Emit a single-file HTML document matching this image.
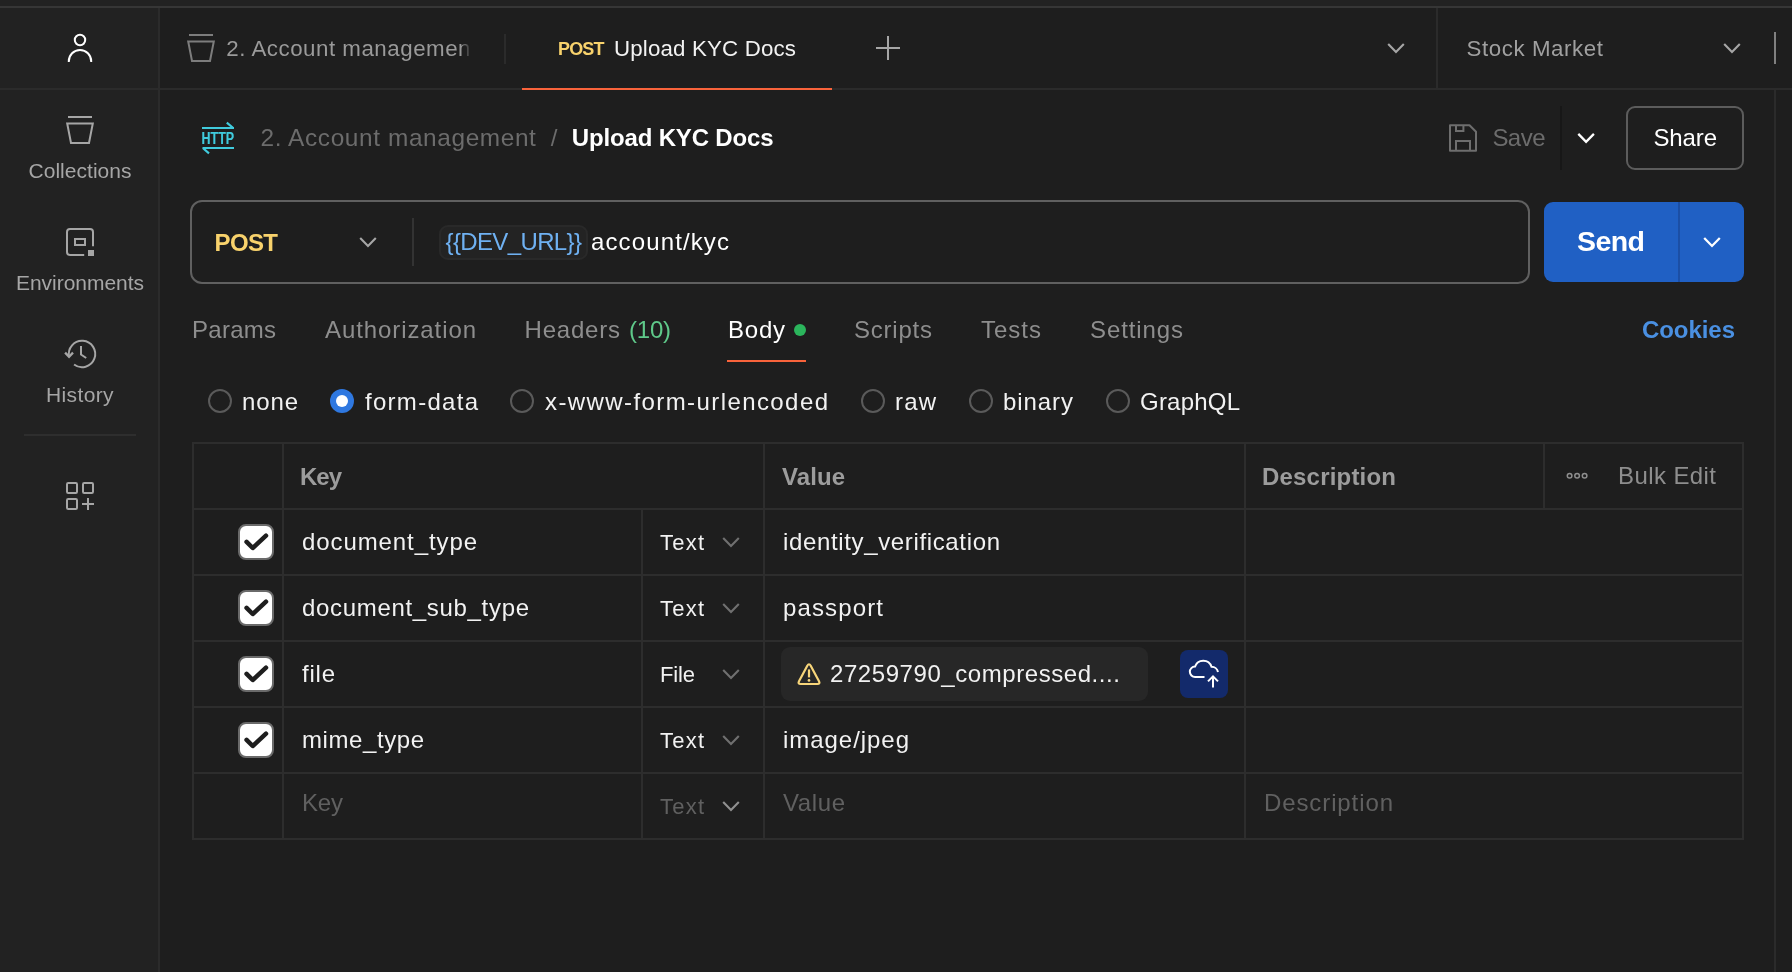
<!DOCTYPE html>
<html lang="en"><head><meta charset="utf-8"><title>Upload KYC Docs</title>
<style>
html,body{margin:0;padding:0;background:#1e1e1e;}
body{width:1792px;height:972px;overflow:hidden;position:relative;font-family:"Liberation Sans",Arial,sans-serif;}
#app{position:absolute;left:0;top:0;width:1792px;height:972px;overflow:hidden;background:#1e1e1e;will-change:transform;}
.a{position:absolute;display:block;}
.t{white-space:nowrap;}
</style></head><body><div id="app">
<div class="a" style="left:0px;top:0px;width:158px;height:972px;background:#222222;"></div>
<div class="a" style="left:0px;top:0px;width:1792px;height:6px;background:#222222;"></div>
<div class="a" style="left:0px;top:6px;width:1792px;height:2px;background:#363636;"></div>
<div class="a" style="left:158px;top:8px;width:2px;height:964px;background:#2b2b2b;"></div>
<div class="a" style="left:0px;top:88px;width:1792px;height:2px;background:#2b2b2b;"></div>
<div class="a" style="left:1774px;top:90px;width:2px;height:882px;background:#2b2b2b;"></div>
<div class="a" style="left:1436px;top:8px;width:2px;height:80px;background:#2b2b2b;"></div>
<div class="a" style="left:1774px;top:32px;width:2px;height:32px;background:#808080;"></div>
<svg class="a" style="left:60px;top:24px;" width="40" height="44" viewBox="0 0 40 44" fill="none"><circle cx="20" cy="16" r="5.2" stroke="#fff" stroke-width="2"/><path d="M8.8 38 V37.2 A11.2 11.2 0 0 1 31.2 37.2 V38" stroke="#fff" stroke-width="2"/></svg>
<svg class="a" style="left:64px;top:114px;" width="32" height="32" viewBox="0 0 32 32" fill="none"><path d="M4 3 H28" stroke="#a6a6a6" stroke-width="2"/><path d="M3.2 9.4 H28.8 L25 28.9 H7 Z" stroke="#a6a6a6" stroke-width="2" stroke-linejoin="miter"/></svg>
<div class="a t" style="left:28.50px;top:157.00px;font-size:21px;line-height:27px;color:#a6a6a6;letter-spacing:0.028px;">Collections</div>
<svg class="a" style="left:60px;top:226px;" width="40" height="34" viewBox="0 0 40 34" fill="none"><path d="M33 20.3 V6 a3 3 0 0 0 -3 -3 H10 a3 3 0 0 0 -3 3 V26 a3 3 0 0 0 3 3 H24.2" stroke="#a6a6a6" stroke-width="2"/><rect x="15" y="13" width="10" height="6" stroke="#a6a6a6" stroke-width="2"/><rect x="28" y="24" width="6" height="6" fill="#a6a6a6"/></svg>
<div class="a t" style="left:16.00px;top:269.00px;font-size:21px;line-height:27px;color:#a6a6a6;letter-spacing:-0.036px;">Environments</div>
<svg class="a" style="left:60px;top:334px;" width="40" height="40" viewBox="0 0 40 40" fill="none"><path d="M9.09 22.74 A13.2 13.2 0 1 1 14.06 30.54" stroke="#a6a6a6" stroke-width="2"/><path d="M5.1 18.6 L9.05 22.75 L13 18.6" stroke="#a6a6a6" stroke-width="2.3" stroke-linejoin="miter"/><path d="M21 12 V20.5 L26.2 24" stroke="#a6a6a6" stroke-width="2"/></svg>
<div class="a t" style="left:46.00px;top:381.00px;font-size:21px;line-height:27px;color:#a6a6a6;letter-spacing:0.377px;">History</div>
<div class="a" style="left:24px;top:434px;width:112px;height:2px;background:#2e2e2e;"></div>
<svg class="a" style="left:60px;top:476px;" width="40" height="40" viewBox="0 0 40 40" fill="none"><rect x="7" y="7" width="10" height="10" rx="1.2" stroke="#a6a6a6" stroke-width="2"/><rect x="23" y="7" width="10" height="10" rx="1.2" stroke="#a6a6a6" stroke-width="2"/><rect x="7" y="23" width="10" height="10" rx="1.2" stroke="#a6a6a6" stroke-width="2"/><path d="M28 22 V34 M22 28 H34" stroke="#a6a6a6" stroke-width="2"/></svg>
<svg class="a" style="left:185px;top:32px;" width="32" height="32" viewBox="0 0 32 32" fill="none"><path d="M4 3 H28" stroke="#7d7d7d" stroke-width="2"/><path d="M3.2 9.4 H28.8 L25 28.9 H7 Z" stroke="#7d7d7d" stroke-width="2" stroke-linejoin="miter"/></svg>
<div class="a t" style="left:226.30px;top:34.00px;font-size:22.3px;line-height:29px;color:#9a9a9a;letter-spacing:0.521px;width:246px;overflow:hidden;">2. Account management</div>
<div class="a" style="left:461px;top:36px;width:12px;height:28px;background:linear-gradient(to right,rgba(30,30,30,0),#1e1e1e 85%);"></div>
<div class="a" style="left:504px;top:34px;width:2px;height:30px;background:#2b2b2b;"></div>
<div class="a t" style="left:558.00px;top:37.00px;font-size:18px;line-height:24px;color:#f8d26c;font-weight:700;letter-spacing:-0.836px;">POST</div>
<div class="a t" style="left:614.00px;top:34.00px;font-size:22.3px;line-height:29px;color:#f2f2f2;letter-spacing:0.163px;">Upload KYC Docs</div>
<div class="a" style="left:522px;top:88px;width:310px;height:2px;background:#f9633b;"></div>
<svg class="a" style="left:874px;top:34px;" width="28" height="28" viewBox="0 0 28 28" fill="none"><path d="M14 2 V26 M2 14 H26" stroke="#a6a6a6" stroke-width="2"/></svg>
<svg class="a" style="left:1382px;top:38px;" width="28" height="20" viewBox="0 0 28 20" fill="none"><path d="M6.20 5.95 L14.00 13.95 L21.80 5.95" stroke="#a6a6a6" stroke-width="2.1"/></svg>
<div class="a t" style="left:1466.50px;top:34.00px;font-size:22.3px;line-height:29px;color:#a0a0a0;letter-spacing:0.580px;">Stock Market</div>
<svg class="a" style="left:1718px;top:38px;" width="28" height="20" viewBox="0 0 28 20" fill="none"><path d="M6.20 5.95 L14.00 13.95 L21.80 5.95" stroke="#a6a6a6" stroke-width="2.1"/></svg>
<svg class="a" style="left:198px;top:120px;" width="40" height="38" viewBox="0 0 40 38" fill="none"><path d="M4 8 H36 M28.8 2.6 L35.2 8" stroke="#40cbdd" stroke-width="2.2"/><path d="M36 28 H4.5 M4.8 28 L11 33.3" stroke="#40cbdd" stroke-width="2.2"/><text x="3.6" y="24.1" font-family="Liberation Sans, Arial, sans-serif" font-size="17.2" font-weight="700" fill="#40cbdd" stroke="#40cbdd" stroke-width="0.2" textLength="32.6" lengthAdjust="spacingAndGlyphs">HTTP</text></svg>
<div class="a t" style="left:260.50px;top:122.00px;font-size:24.4px;line-height:31px;color:#6c6c6c;letter-spacing:0.617px;">2. Account management</div>
<div class="a t" style="left:550.70px;top:122.00px;font-size:24px;line-height:31px;color:#6c6c6c;">/</div>
<div class="a t" style="left:571.80px;top:122.00px;font-size:24px;line-height:31px;color:#ffffff;font-weight:700;letter-spacing:-0.166px;">Upload KYC Docs</div>
<svg class="a" style="left:1446px;top:122px;" width="34" height="32" viewBox="0 0 34 32" fill="none"><path d="M4 3.2 H23.5 L30 9.7 V28.8 H4 Z" stroke="#6e6e6e" stroke-width="2" stroke-linejoin="round"/><path d="M10 3.2 V8.9 H17.4 V3.2" stroke="#6e6e6e" stroke-width="2"/><path d="M10 28.8 V18.9 H24 V28.8" stroke="#6e6e6e" stroke-width="2"/></svg>
<div class="a t" style="left:1492.40px;top:122.00px;font-size:24px;line-height:31px;color:#6c6c6c;letter-spacing:-0.535px;">Save</div>
<div class="a" style="left:1560px;top:106px;width:2px;height:64px;background:#171717;"></div>
<svg class="a" style="left:1572px;top:128px;" width="28" height="20" viewBox="0 0 28 20" fill="none"><path d="M6.30 5.85 L14.10 13.85 L21.90 5.85" stroke="#ffffff" stroke-width="2.3"/></svg>
<div class="a" style="left:1626px;top:106px;width:118px;height:64px;border:2px solid #5c5c5c;box-sizing:border-box;border-radius:9px;"></div>
<div class="a t" style="left:1653.50px;top:122.00px;font-size:24px;line-height:31px;color:#ffffff;letter-spacing:-0.136px;">Share</div>
<div class="a" style="left:190px;top:200px;width:1340px;height:84px;border:2px solid #606060;box-sizing:border-box;border-radius:12px;"></div>
<div class="a t" style="left:214.50px;top:227.00px;font-size:24px;line-height:31px;color:#f8d26c;font-weight:700;letter-spacing:-0.615px;">POST</div>
<svg class="a" style="left:354px;top:232px;" width="28" height="20" viewBox="0 0 28 20" fill="none"><path d="M6.20 5.95 L14.00 13.95 L21.80 5.95" stroke="#a6a6a6" stroke-width="2.1"/></svg>
<div class="a" style="left:412px;top:218px;width:2px;height:48px;background:#333333;"></div>
<div class="a" style="left:439px;top:225px;width:149px;height:35px;background:#232323;border:2px solid #292929;box-sizing:border-box;border-radius:9px;"></div>
<div class="a t" style="left:445.50px;top:226.00px;font-size:24px;line-height:31px;color:#6fb1f2;letter-spacing:-0.627px;">{{DEV_URL}}</div>
<div class="a t" style="left:591.00px;top:226.00px;font-size:24px;line-height:31px;color:#ffffff;letter-spacing:1.127px;">account/kyc</div>
<div class="a" style="left:1544px;top:202px;width:200px;height:80px;background:#2060c4;border-radius:9px;"></div>
<div class="a" style="left:1678px;top:202px;width:2px;height:80px;background:#1b4fa6;"></div>
<div class="a t" style="left:1577.00px;top:223.00px;font-size:28.5px;line-height:36px;color:#ffffff;font-weight:700;letter-spacing:-0.560px;">Send</div>
<svg class="a" style="left:1698px;top:232px;" width="28" height="20" viewBox="0 0 28 20" fill="none"><path d="M6.20 5.95 L14.00 13.95 L21.80 5.95" stroke="#ffffff" stroke-width="2.3"/></svg>
<div class="a t" style="left:192.00px;top:314.00px;font-size:24px;line-height:31px;color:#8e8e8e;letter-spacing:0.262px;">Params</div>
<div class="a t" style="left:325.00px;top:314.00px;font-size:24px;line-height:31px;color:#8e8e8e;letter-spacing:0.909px;">Authorization</div>
<div class="a t" style="left:524.50px;top:314.00px;font-size:24px;line-height:31px;color:#8e8e8e;letter-spacing:0.797px;">Headers</div>
<div class="a t" style="left:629.00px;top:314.00px;font-size:24px;line-height:31px;color:#5fc98a;letter-spacing:-0.227px;">(10)</div>
<div class="a t" style="left:728.00px;top:314.00px;font-size:24px;line-height:31px;color:#ffffff;letter-spacing:0.765px;">Body</div>
<div class="a" style="left:794px;top:324px;width:12px;height:12px;background:#2bb55c;border-radius:6px;"></div>
<div class="a" style="left:727px;top:360px;width:79px;height:2px;background:#f9633b;"></div>
<div class="a t" style="left:854.00px;top:314.00px;font-size:24px;line-height:31px;color:#8e8e8e;letter-spacing:0.775px;">Scripts</div>
<div class="a t" style="left:981.00px;top:314.00px;font-size:24px;line-height:31px;color:#8e8e8e;letter-spacing:0.996px;">Tests</div>
<div class="a t" style="left:1090.00px;top:314.00px;font-size:24px;line-height:31px;color:#8e8e8e;letter-spacing:0.897px;">Settings</div>
<div class="a t" style="left:1642.00px;top:314.00px;font-size:24px;line-height:31px;color:#4a90e2;font-weight:700;letter-spacing:-0.061px;">Cookies</div>
<div class="a" style="left:208px;top:389px;width:24px;height:24px;border:2px solid #5a5a5a;box-sizing:border-box;border-radius:12px;"></div>
<div class="a t" style="left:242.00px;top:386.00px;font-size:24px;line-height:31px;color:#f2f2f2;letter-spacing:0.869px;">none</div>
<div class="a" style="left:330px;top:389px;width:24px;height:24px;background:#2f78e0;border-radius:12px;"></div>
<div class="a" style="left:336px;top:395px;width:12px;height:12px;background:#ffffff;border-radius:6px;"></div>
<div class="a t" style="left:365.00px;top:386.00px;font-size:24px;line-height:31px;color:#f2f2f2;letter-spacing:1.287px;">form-data</div>
<div class="a" style="left:510px;top:389px;width:24px;height:24px;border:2px solid #5a5a5a;box-sizing:border-box;border-radius:12px;"></div>
<div class="a t" style="left:545.00px;top:386.00px;font-size:24px;line-height:31px;color:#f2f2f2;letter-spacing:1.413px;">x-www-form-urlencoded</div>
<div class="a" style="left:861px;top:389px;width:24px;height:24px;border:2px solid #5a5a5a;box-sizing:border-box;border-radius:12px;"></div>
<div class="a t" style="left:895.00px;top:386.00px;font-size:24px;line-height:31px;color:#f2f2f2;letter-spacing:1.164px;">raw</div>
<div class="a" style="left:969px;top:389px;width:24px;height:24px;border:2px solid #5a5a5a;box-sizing:border-box;border-radius:12px;"></div>
<div class="a t" style="left:1003.00px;top:386.00px;font-size:24px;line-height:31px;color:#f2f2f2;letter-spacing:0.926px;">binary</div>
<div class="a" style="left:1106px;top:389px;width:24px;height:24px;border:2px solid #5a5a5a;box-sizing:border-box;border-radius:12px;"></div>
<div class="a t" style="left:1140.00px;top:386.00px;font-size:24px;line-height:31px;color:#f2f2f2;letter-spacing:0.213px;">GraphQL</div>
<div class="a" style="left:192px;top:442px;width:1552px;height:2px;background:#2d2d2d;"></div>
<div class="a" style="left:192px;top:508px;width:1552px;height:2px;background:#2d2d2d;"></div>
<div class="a" style="left:192px;top:574px;width:1552px;height:2px;background:#2d2d2d;"></div>
<div class="a" style="left:192px;top:640px;width:1552px;height:2px;background:#2d2d2d;"></div>
<div class="a" style="left:192px;top:706px;width:1552px;height:2px;background:#2d2d2d;"></div>
<div class="a" style="left:192px;top:772px;width:1552px;height:2px;background:#2d2d2d;"></div>
<div class="a" style="left:192px;top:838px;width:1552px;height:2px;background:#2d2d2d;"></div>
<div class="a" style="left:192px;top:442px;width:2px;height:398px;background:#2d2d2d;"></div>
<div class="a" style="left:1742px;top:442px;width:2px;height:398px;background:#2d2d2d;"></div>
<div class="a" style="left:282px;top:442px;width:2px;height:398px;background:#2d2d2d;"></div>
<div class="a" style="left:763px;top:442px;width:2px;height:398px;background:#2d2d2d;"></div>
<div class="a" style="left:1244px;top:442px;width:2px;height:398px;background:#2d2d2d;"></div>
<div class="a" style="left:641px;top:508px;width:2px;height:332px;background:#2d2d2d;"></div>
<div class="a" style="left:1543px;top:442px;width:2px;height:67px;background:#2d2d2d;"></div>
<div class="a t" style="left:300.00px;top:461.00px;font-size:24px;line-height:31px;color:#9c9c9c;font-weight:700;letter-spacing:-1.014px;">Key</div>
<div class="a t" style="left:782.00px;top:461.00px;font-size:24px;line-height:31px;color:#9c9c9c;font-weight:700;letter-spacing:0.073px;">Value</div>
<div class="a t" style="left:1262.00px;top:461.00px;font-size:24px;line-height:31px;color:#9c9c9c;font-weight:700;letter-spacing:0.197px;">Description</div>
<svg class="a" style="left:1562px;top:468px;" width="30" height="16" viewBox="0 0 30 16" fill="none"><circle cx="7.6" cy="7.8" r="2.3" stroke="#8e8e8e" stroke-width="1.5"/><circle cx="15.1" cy="7.8" r="2.3" stroke="#8e8e8e" stroke-width="1.5"/><circle cx="22.6" cy="7.8" r="2.3" stroke="#8e8e8e" stroke-width="1.5"/></svg>
<div class="a t" style="left:1618.00px;top:460.00px;font-size:24px;line-height:31px;color:#8e8e8e;letter-spacing:0.411px;">Bulk Edit</div>
<div class="a" style="left:238px;top:524px;width:36px;height:36px;background:#ffffff;border:2px solid #6a6a6a;box-sizing:border-box;border-radius:8px;"></div>
<svg class="a" style="left:238px;top:524px;" width="36" height="36" viewBox="0 0 36 36" fill="none"><path d="M8.6 17.9 L14.7 24 L28 11.7" stroke="#1e1e1e" stroke-width="4.5" stroke-linejoin="round" stroke-linecap="round"/></svg>
<div class="a t" style="left:302.00px;top:526.00px;font-size:24px;line-height:31px;color:#f2f2f2;letter-spacing:0.907px;">document_type</div>
<div class="a t" style="left:660.00px;top:528.00px;font-size:22px;line-height:29px;color:#f2f2f2;letter-spacing:1.217px;">Text</div>
<svg class="a" style="left:717px;top:532px;" width="28" height="20" viewBox="0 0 28 20" fill="none"><path d="M6.20 5.95 L14.00 13.95 L21.80 5.95" stroke="#707070" stroke-width="2.1"/></svg>
<div class="a t" style="left:783.00px;top:526.00px;font-size:24px;line-height:31px;color:#f2f2f2;letter-spacing:0.644px;">identity_verification</div>
<div class="a" style="left:238px;top:590px;width:36px;height:36px;background:#ffffff;border:2px solid #6a6a6a;box-sizing:border-box;border-radius:8px;"></div>
<svg class="a" style="left:238px;top:590px;" width="36" height="36" viewBox="0 0 36 36" fill="none"><path d="M8.6 17.9 L14.7 24 L28 11.7" stroke="#1e1e1e" stroke-width="4.5" stroke-linejoin="round" stroke-linecap="round"/></svg>
<div class="a t" style="left:302.00px;top:592.00px;font-size:24px;line-height:31px;color:#f2f2f2;letter-spacing:0.678px;">document_sub_type</div>
<div class="a t" style="left:660.00px;top:594.00px;font-size:22px;line-height:29px;color:#f2f2f2;letter-spacing:1.217px;">Text</div>
<svg class="a" style="left:717px;top:598px;" width="28" height="20" viewBox="0 0 28 20" fill="none"><path d="M6.20 5.95 L14.00 13.95 L21.80 5.95" stroke="#707070" stroke-width="2.1"/></svg>
<div class="a t" style="left:783.00px;top:592.00px;font-size:24px;line-height:31px;color:#f2f2f2;letter-spacing:1.135px;">passport</div>
<div class="a" style="left:238px;top:656px;width:36px;height:36px;background:#ffffff;border:2px solid #6a6a6a;box-sizing:border-box;border-radius:8px;"></div>
<svg class="a" style="left:238px;top:656px;" width="36" height="36" viewBox="0 0 36 36" fill="none"><path d="M8.6 17.9 L14.7 24 L28 11.7" stroke="#1e1e1e" stroke-width="4.5" stroke-linejoin="round" stroke-linecap="round"/></svg>
<div class="a t" style="left:302.00px;top:658.00px;font-size:24px;line-height:31px;color:#f2f2f2;letter-spacing:0.773px;">file</div>
<div class="a t" style="left:660.00px;top:660.00px;font-size:22px;line-height:29px;color:#f2f2f2;letter-spacing:-0.150px;">File</div>
<svg class="a" style="left:717px;top:664px;" width="28" height="20" viewBox="0 0 28 20" fill="none"><path d="M6.20 5.95 L14.00 13.95 L21.80 5.95" stroke="#707070" stroke-width="2.1"/></svg>
<div class="a" style="left:238px;top:722px;width:36px;height:36px;background:#ffffff;border:2px solid #6a6a6a;box-sizing:border-box;border-radius:8px;"></div>
<svg class="a" style="left:238px;top:722px;" width="36" height="36" viewBox="0 0 36 36" fill="none"><path d="M8.6 17.9 L14.7 24 L28 11.7" stroke="#1e1e1e" stroke-width="4.5" stroke-linejoin="round" stroke-linecap="round"/></svg>
<div class="a t" style="left:302.00px;top:724.00px;font-size:24px;line-height:31px;color:#f2f2f2;letter-spacing:0.578px;">mime_type</div>
<div class="a t" style="left:660.00px;top:726.00px;font-size:22px;line-height:29px;color:#f2f2f2;letter-spacing:1.217px;">Text</div>
<svg class="a" style="left:717px;top:730px;" width="28" height="20" viewBox="0 0 28 20" fill="none"><path d="M6.20 5.95 L14.00 13.95 L21.80 5.95" stroke="#707070" stroke-width="2.1"/></svg>
<div class="a t" style="left:783.00px;top:724.00px;font-size:24px;line-height:31px;color:#f2f2f2;letter-spacing:0.954px;">image/jpeg</div>
<div class="a" style="left:781px;top:647px;width:367px;height:54px;background:#272727;border-radius:9px;"></div>
<svg class="a" style="left:794px;top:660px;" width="30" height="28" viewBox="0 0 30 28" fill="none"><path d="M13.3 5.8 Q15 2.7 16.7 5.8 L25 21.2 Q26.4 24 23.4 24 H6.6 Q3.6 24 5 21.2 Z" stroke="#f7d57a" stroke-width="2.2" stroke-linejoin="round"/><path d="M15 9.4 V17.4" stroke="#f7d57a" stroke-width="2.2"/><circle cx="15" cy="20.4" r="1.35" fill="#f7d57a"/></svg>
<div class="a t" style="left:830.00px;top:658.00px;font-size:24px;line-height:31px;color:#f2f2f2;letter-spacing:0.567px;">27259790_compressed....</div>
<div class="a" style="left:1180px;top:650px;width:48px;height:48px;background:#132a6b;border-radius:8px;"></div>
<svg class="a" style="left:1180px;top:650px;" width="48" height="48" viewBox="0 0 48 48" fill="none"><path d="M24.5 27 H15.1 A5.2 5.2 0 0 1 15 16.6 A8.7 8.7 0 0 1 31.5 16.8 A6.5 6.5 0 0 1 38 22" stroke="#fff" stroke-width="2"/><path d="M33 37.5 V26.5 M28 31.4 L33 26.4 L38 31.4" stroke="#fff" stroke-width="2"/></svg>
<div class="a t" style="left:302.00px;top:787.00px;font-size:24px;line-height:31px;color:#606060;letter-spacing:-0.178px;">Key</div>
<div class="a t" style="left:660.00px;top:792.00px;font-size:22px;line-height:29px;color:#606060;letter-spacing:1.217px;">Text</div>
<svg class="a" style="left:717px;top:796px;" width="28" height="20" viewBox="0 0 28 20" fill="none"><path d="M6.20 5.95 L14.00 13.95 L21.80 5.95" stroke="#909090" stroke-width="2.1"/></svg>
<div class="a t" style="left:783.00px;top:787.00px;font-size:24px;line-height:31px;color:#606060;letter-spacing:0.599px;">Value</div>
<div class="a t" style="left:1264.00px;top:787.00px;font-size:24px;line-height:31px;color:#606060;letter-spacing:0.895px;">Description</div>
</div></body></html>
